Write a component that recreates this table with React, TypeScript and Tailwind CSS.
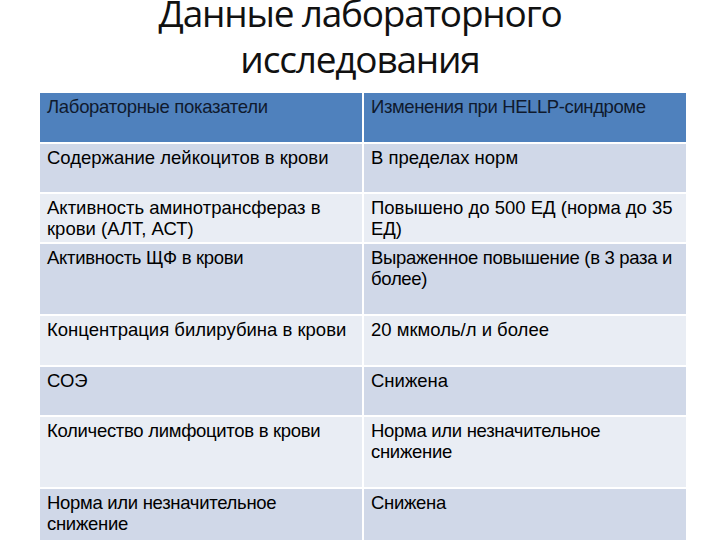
import React from "react";

const rows: { a: string; b: string; h: string; dark: boolean; tight?: boolean }[] = [
  { a: "Содержание лейкоцитов в крови", b: "В пределах норм", h: "h-[48px]", dark: true },
  { a: "Активность аминотрансфераз в крови (АЛТ, АСТ)", b: "Повышено до 500 ЕД (норма до 35 ЕД)", h: "h-[48px]", dark: false },
  { a: "Активность ЩФ в крови", b: "Выраженное повышение (в 3 раза и более)", h: "h-[70px]", dark: true, tight: true },
  { a: "Концентрация билирубина в крови", b: "20 мкмоль/л и более", h: "h-[49px]", dark: false },
  { a: "СОЭ", b: "Снижена", h: "h-[48px]", dark: true },
  { a: "Количество лимфоцитов в крови", b: "Норма или незначительное снижение", h: "h-[70px]", dark: false, tight: true },
  { a: "Норма или незначительное снижение", b: "Снижена", h: "h-[60px]", dark: true, tight: true },
];

export default function App() {
  return (
    <div className="w-[720px] h-[540px] overflow-hidden bg-white relative">
      <div
        className="mt-[-10px] text-center text-[37px] leading-[46px] text-[#111] tracking-[-1.2px]"
        style={{ fontFamily: '"Open Sans", "Noto Sans", sans-serif' }}
      >
        <div>Данные лабораторного</div>
        <div>исследования</div>
      </div>
      <div
        className="ml-[40px] mt-[11px] w-[646px] grid grid-cols-[322px_322px] gap-x-[2px] gap-y-[2px] text-[18.5px] leading-[21px] text-black"
        style={{ fontFamily: '"Liberation Sans", Arial, sans-serif' }}
      >
        <div className="h-[49px] bg-[#4F81BD] pl-[7px] pt-[3px] text-[#0f1a2e] tracking-[-0.3px]">Лабораторные показатели</div>
        <div className="h-[49px] bg-[#4F81BD] pl-[7px] pt-[3px] text-[#0f1a2e] tracking-[-0.4px]">Изменения при HELLP-синдроме</div>
        {rows.map((r, i) => (
          <React.Fragment key={i}>
            <div className={`${r.h} ${r.dark ? "bg-[#D0D8E8]" : "bg-[#E9EDF4]"} pl-[7px] pt-[3px] ${r.tight ? "tracking-[-0.3px]" : ""}`}>{r.a}</div>
            <div className={`${r.h} ${r.dark ? "bg-[#D0D8E8]" : "bg-[#E9EDF4]"} pl-[7px] pt-[3px] ${r.tight ? "tracking-[-0.3px]" : ""}`}>{r.b}</div>
          </React.Fragment>
        ))}
      </div>
    </div>
  );
}
